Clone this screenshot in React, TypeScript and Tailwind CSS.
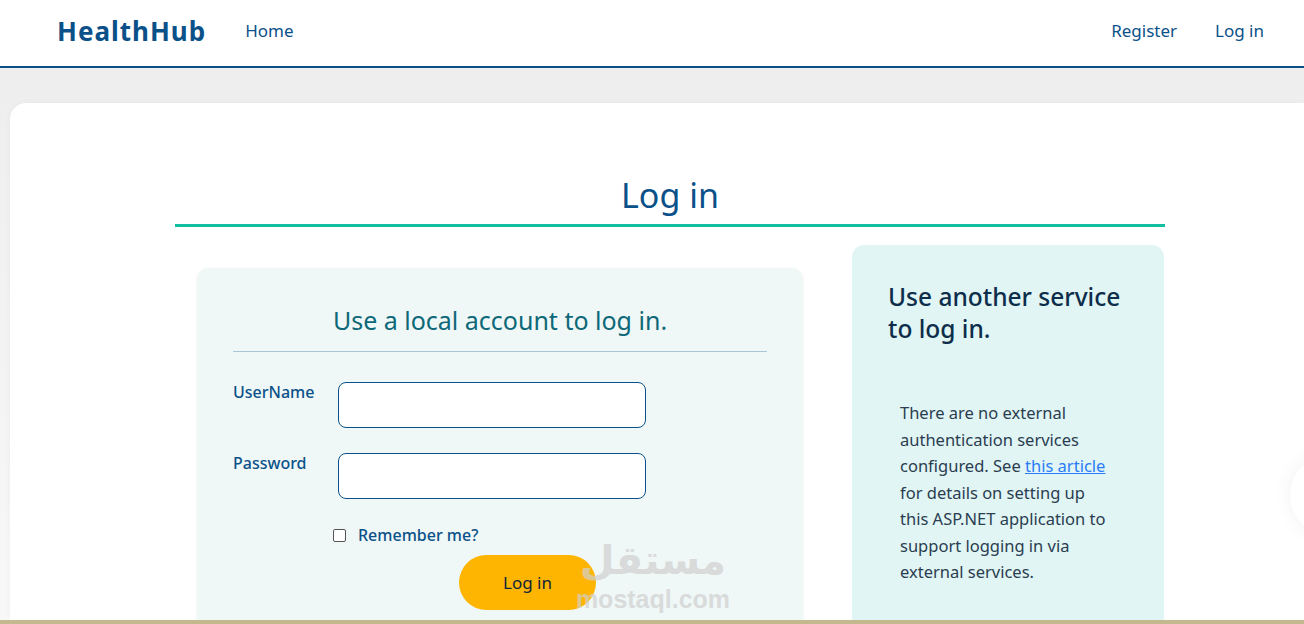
import React from "react";

export default function App() {
  const font = { fontFamily: '"Noto Sans", "Open Sans", sans-serif' };
  return (
    <div className="relative flex h-[624px] w-[1304px] flex-col overflow-hidden bg-[#f5f5f5]" style={font}>
      <nav className="flex h-[68px] shrink-0 items-center border-b-2 border-[#0b5189] bg-white pb-[4px] pl-[57px] pr-[40px]">
        <span className="text-[26px] font-bold tracking-[1px] text-[#0b5189]">HealthHub</span>
        <a className="ml-[39px] text-[17px] text-[#0b5189]">Home</a>
        <div className="ml-auto flex gap-[38px] text-[17px] text-[#0b5189]">
          <a>Register</a>
          <a>Log in</a>
        </div>
      </nav>
      <main className="flex-1 overflow-hidden bg-gradient-to-b from-[#eeeeee] to-[#f8f8f8] pl-[10px] pt-[35px]">
        <div className="h-full rounded-tl-[16px] bg-white pl-[165px] shadow-[0_0_6px_rgba(0,0,0,0.04)]">
          <div className="w-[990px]">
            <h1 className="pt-[70px] text-center text-[34px] leading-[44px] text-[#0b5189]">Log in</h1>
            <div className="mt-[7px] h-[3px] bg-[#12bfa2]" />
            <div className="mt-[18px] flex items-start pl-[22px]">
              <section className="mt-[23px] h-[400px] w-[606px] rounded-[12px] bg-[#eff8f7] px-[36px] shadow-[0_1px_4px_rgba(0,0,0,0.05)]">
                <h2 className="pt-[36px] text-center text-[25px] leading-[32px] text-[#0e6878]">
                  Use a local account to log in.
                </h2>
                <div className="mt-[15px] h-px bg-[#a9c5d3]" />
                <div className="mt-[30px] flex items-start">
                  <label className="mt-[-2px] w-[105px] text-[16px] font-medium text-[#0b5189]">UserName</label>
                  <input className="h-[46px] w-[308px] rounded-[8px] border border-[#0b5189] bg-white outline-none" />
                </div>
                <div className="mt-[25px] flex items-start">
                  <label className="mt-[-2px] w-[105px] text-[16px] font-medium text-[#0b5189]">Password</label>
                  <input type="password" className="h-[46px] w-[308px] rounded-[8px] border border-[#0b5189] bg-white outline-none" />
                </div>
                <div className="mt-[24px] flex items-center pl-[100px]">
                  <span className="h-[13px] w-[13px] rounded-[2px] border border-[#555] bg-white" />
                  <span className="ml-[12px] text-[16px] font-medium text-[#0b5189]">Remember me?</span>
                </div>
                <div className="mt-[8px] pl-[226px]">
                  <button className="h-[55px] w-[137px] rounded-full bg-[#feb502] text-[17px] text-[#10243a]">Log in</button>
                </div>
              </section>
              <aside className="ml-[49px] h-[400px] w-[312px] rounded-[12px] bg-[#e0f5f4] pl-[36px] pr-[20px]">
                <h3 className="pt-[36px] text-[24.5px] font-medium leading-[32px] text-[#0d2d4b]">
                  Use another service to log in.
                </h3>
                <p className="mt-[55px] w-[225px] pl-[12px] text-[16.5px] leading-[26.5px] text-[#2b3d50]">
                  <span>There are no external authentication services configured. See </span>
                  <a className="text-[#2b7cf6] underline">this article</a>
                  <span> for details on setting up this ASP.NET application to support logging in via external services.</span>
                </p>
              </aside>
            </div>
          </div>
        </div>
      </main>
      <div className="h-[4px] shrink-0 bg-[#c4b88e]" />
      <div className="pointer-events-none absolute left-[575px] top-[532px] flex w-[156px] flex-col items-center text-[#d0d0d0] opacity-70">
        <span className="block h-[54px] text-[40px] font-bold leading-[54px]" style={{ fontFamily: '"Noto Sans", "DejaVu Sans", sans-serif' }}>مستقل</span>
        <span className="block h-[26px] text-[25px] font-bold leading-[26px]" style={{ fontFamily: '"Liberation Sans", sans-serif' }}>mostaql.com</span>
      </div>
      <div className="pointer-events-none absolute left-[1290px] top-[455px] h-[80px] w-[80px] rounded-full bg-white shadow-[0_0_20px_rgba(0,0,0,0.06)]" />
    </div>
  );
}
